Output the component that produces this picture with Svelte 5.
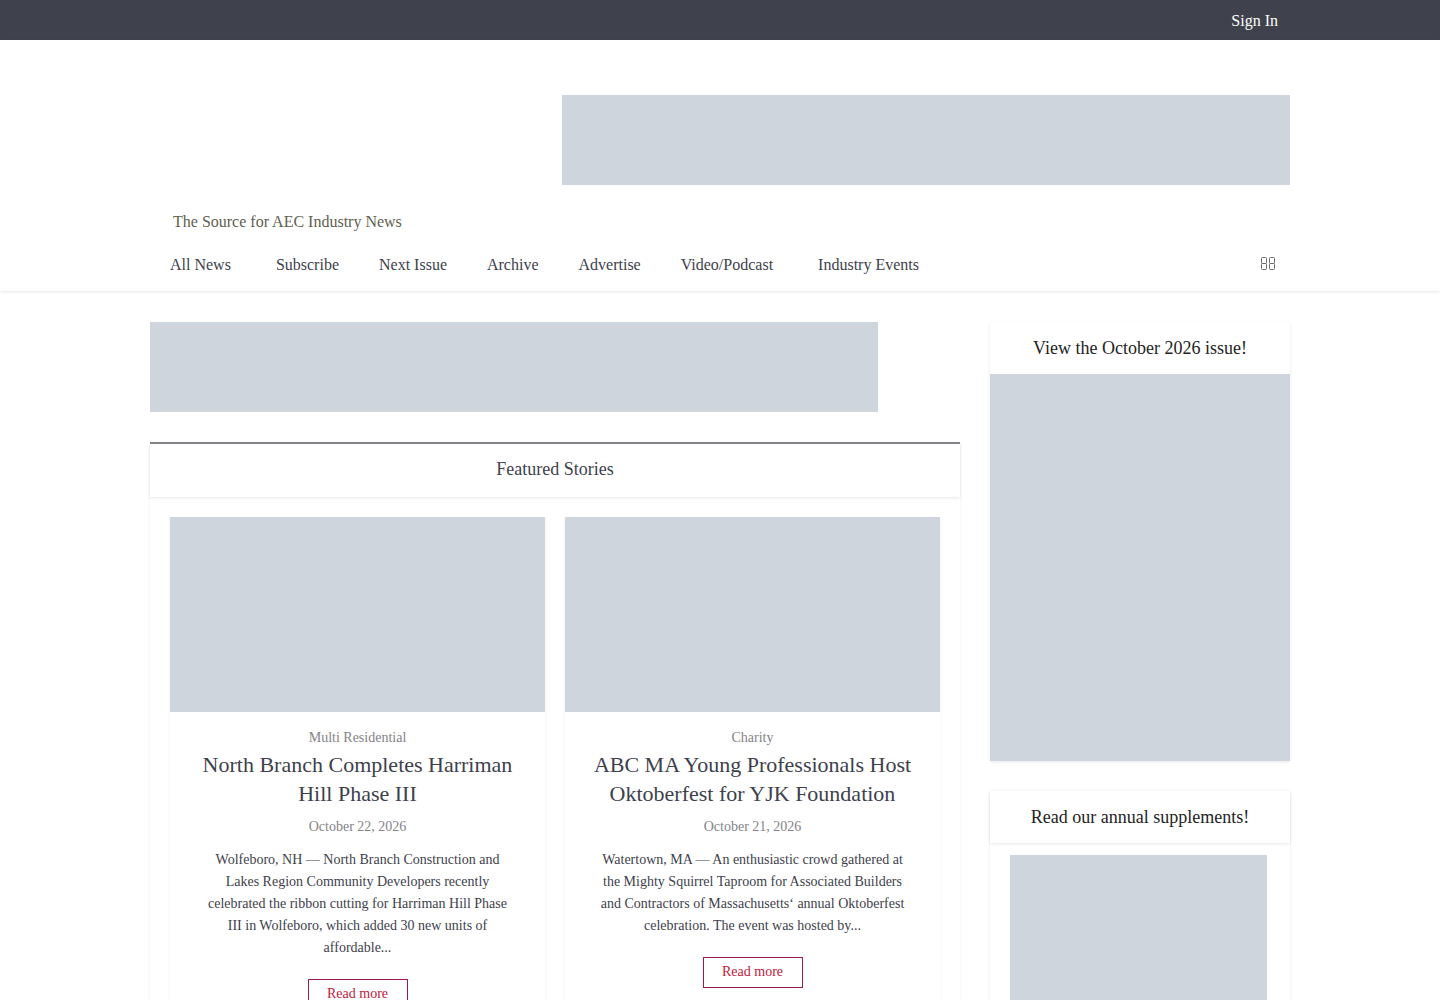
<script lang="ts">
  interface NavItem {
    label: string;
    dropdown?: boolean;
  }

  interface Story {
    category: string;
    title: string;
    date: string;
    excerpt: string;
  }

  const navItems: NavItem[] = [
    { label: 'All News', dropdown: true },
    { label: 'Subscribe' },
    { label: 'Next Issue' },
    { label: 'Archive' },
    { label: 'Advertise' },
    { label: 'Video/Podcast', dropdown: true },
    { label: 'Industry Events' },
  ];

  const stories: Story[] = [
    {
      category: 'Multi Residential',
      title: 'North Branch Completes Harriman Hill Phase III',
      date: 'October 22, 2026',
      excerpt:
        'Wolfeboro, NH — North Branch Construction and Lakes Region Community Developers recently celebrated the ribbon cutting for Harriman Hill Phase III in Wolfeboro, which added 30 new units of affordable...',
    },
    {
      category: 'Charity',
      title: 'ABC MA Young Professionals Host Oktoberfest for YJK Foundation',
      date: 'October 21, 2026',
      excerpt:
        'Watertown, MA — An enthusiastic crowd gathered at the Mighty Squirrel Taproom for Associated Builders and Contractors of Massachusetts‘ annual Oktoberfest celebration. The event was hosted by...',
    },
  ];
</script>

<div class="page">
  <div class="top-bar">
    <div class="container top-bar-inner">
      <a href="#sign-in">Sign In</a>
    </div>
  </div>

  <header class="site-header">
    <div class="container">
      <div class="banner header-banner"></div>
      <p class="tagline">The Source for AEC Industry News</p>
      <div class="nav-row">
        <nav class="main-nav">
          {#each navItems as item}
            <a href="#nav" class:dropdown={item.dropdown}>{item.label}</a>
          {/each}
        </nav>
        <button class="search-btn" aria-label="Search">
          <svg width="14" height="14" viewBox="0 0 14 14" fill="none" stroke="#6b6a68">
            <rect x="0.5" y="0.5" width="5" height="6" rx="1" />
            <rect x="0.5" y="6.5" width="5" height="6" rx="1" />
            <rect x="8.5" y="0.5" width="5" height="6" rx="1" />
            <rect x="8.5" y="6.5" width="5" height="6" rx="1" />
          </svg>
        </button>
      </div>
    </div>
  </header>

  <div class="container layout">
    <main class="content">
      <div class="banner"></div>

      <section class="featured">
        <h2 class="featured-title">Featured Stories</h2>
        <div class="stories">
          {#each stories as story}
            <article class="story">
              <div class="story-image"></div>
              <div class="story-body">
                <a class="meta" href="#category">{story.category}</a>
                <h3><a href="#story">{story.title}</a></h3>
                <span class="meta">{story.date}</span>
                <p>{story.excerpt}</p>
                <a class="read-more" href="#story">Read more</a>
              </div>
            </article>
          {/each}
        </div>
      </section>
    </main>

    <aside class="sidebar">
      <section class="widget">
        <h4>View the October 2026 issue!</h4>
        <div class="issue-cover"></div>
      </section>
      <section class="widget">
        <h4 class="ruled">Read our annual supplements!</h4>
        <div class="widget-body">
          <div class="supplement-cover"></div>
        </div>
      </section>
    </aside>
  </div>
</div>

<style>
  :global(body) {
    margin: 0;
    background: #fff;
  }

  .page {
    font-family: "Liberation Serif", "Times New Roman", serif;
    font-size: 16px;
    line-height: 24px;
    color: #3e414c;
  }

  a {
    color: inherit;
    text-decoration: none;
  }

  h2,
  h3,
  h4,
  p {
    margin: 0;
    font-weight: 400;
  }

  .container {
    max-width: 1140px;
    margin: 0 auto;
  }

  .top-bar {
    background: #3f424d;
    color: #fff;
  }
  .top-bar-inner {
    display: flex;
    justify-content: flex-end;
  }
  .top-bar a {
    padding: 2px 12px 0;
    line-height: 38px;
  }

  .site-header {
    padding: 55px 0 1px;
    background: #fff;
    box-shadow: 0 1px 3px rgba(0, 0, 0, 0.1);
  }

  .banner {
    max-width: 728px;
    height: 90px;
    background: #cfd5dd;
  }
  .header-banner {
    margin-left: auto;
  }

  .tagline {
    margin-top: 25px;
    padding-left: 23px;
    color: #61604f;
  }

  .nav-row {
    display: flex;
    align-items: center;
    justify-content: space-between;
    padding-top: 6px;
  }
  .main-nav {
    display: flex;
  }
  .main-nav a {
    padding: 0 20px;
    line-height: 50px;
  }
  .main-nav .dropdown {
    padding-right: 25px;
  }

  .search-btn {
    display: flex;
    padding: 0 15px 2px;
    border: none;
    background: none;
    cursor: pointer;
  }

  .layout {
    display: flex;
    align-items: flex-start;
    gap: 30px;
    padding: 31px 0 40px;
  }

  .content {
    flex: 1;
    min-width: 0;
  }

  .featured {
    margin-top: 30px;
    border-top: 2px solid #838388;
    background: #fff;
    box-shadow: 0 1px 3px rgba(0, 0, 0, 0.07);
  }
  .featured-title {
    padding: 13px 20px 16px;
    font-size: 18px;
    text-align: center;
    box-shadow: 0 1px 3px rgba(0, 0, 0, 0.1);
  }

  .stories {
    display: grid;
    grid-template-columns: 1fr 1fr;
    align-items: start;
    gap: 20px;
    padding: 20px;
  }

  .story {
    box-shadow: 0 1px 3px rgba(0, 0, 0, 0.07);
  }
  .story-image {
    height: 195px;
    background: #cfd5dd;
  }
  .story-body {
    display: flex;
    flex-direction: column;
    align-items: center;
    padding: 15px 25px 30px;
    text-align: center;
  }
  .meta {
    font-size: 14px;
    line-height: 22px;
    color: #838388;
  }
  .story-body h3 {
    margin: 1px 0 8px;
    font-size: 22px;
    line-height: 29px;
  }
  .story-body p {
    margin: 11px 5px 20px;
    font-size: 14px;
    line-height: 22px;
  }
  .read-more {
    box-sizing: border-box;
    min-width: 100px;
    padding: 0 18px 2px;
    border: 1px solid #9e1a55;
    font-size: 14px;
    line-height: 27px;
    color: #c1203b;
  }

  .sidebar {
    flex: 0 0 300px;
    display: flex;
    flex-direction: column;
    gap: 30px;
  }

  .widget {
    border-radius: 2px;
    background: #fff;
    box-shadow: 0 1px 3px rgba(0, 0, 0, 0.1);
  }
  .widget h4 {
    padding: 14px 20px;
    font-size: 18px;
    text-align: center;
    color: #232323;
  }
  .widget .ruled {
    box-shadow: 0 1px 3px rgba(0, 0, 0, 0.1);
  }
  .widget-body {
    padding: 12px 20px 20px;
  }

  .issue-cover {
    height: 387px;
    background: #cfd5dd;
  }
  .supplement-cover {
    max-width: 257px;
    height: 332px;
    background: #cfd5dd;
  }
</style>
